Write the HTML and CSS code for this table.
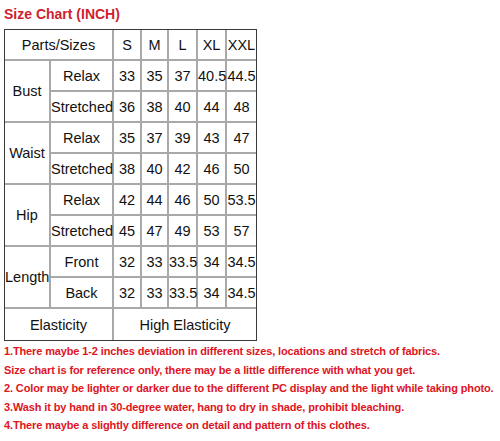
FILE: index.html
```html
<!DOCTYPE html>
<html>
<head>
<meta charset="utf-8">
<link rel="stylesheet" href="styles.css">
</head>
<body>
<div class="page">
  <h1 class="title">Size Chart (INCH)</h1>
  <table class="chart">
    <colgroup>
      <col class="c-part"><col class="c-sub"><col class="c-s"><col class="c-m"><col class="c-l"><col class="c-xl"><col class="c-xxl">
    </colgroup>
    <tr><td colspan="2">Parts/Sizes</td><td>S</td><td>M</td><td>L</td><td>XL</td><td class="last">XXL</td></tr>
    <tr><td rowspan="2">Bust</td><td>Relax</td><td>33</td><td>35</td><td>37</td><td>40.5</td><td class="last">44.5</td></tr>
    <tr><td>Stretched</td><td>36</td><td>38</td><td>40</td><td>44</td><td class="last">48</td></tr>
    <tr><td rowspan="2">Waist</td><td>Relax</td><td>35</td><td>37</td><td>39</td><td>43</td><td class="last">47</td></tr>
    <tr><td>Stretched</td><td>38</td><td>40</td><td>42</td><td>46</td><td class="last">50</td></tr>
    <tr><td rowspan="2">Hip</td><td>Relax</td><td>42</td><td>44</td><td>46</td><td>50</td><td class="last">53.5</td></tr>
    <tr><td>Stretched</td><td>45</td><td>47</td><td>49</td><td>53</td><td class="last">57</td></tr>
    <tr><td rowspan="2">Length</td><td>Front</td><td>32</td><td>33</td><td>33.5</td><td>34</td><td class="last">34.5</td></tr>
    <tr><td>Back</td><td>32</td><td>33</td><td>33.5</td><td>34</td><td class="last">34.5</td></tr>
    <tr class="bottom"><td colspan="2">Elasticity</td><td colspan="5" class="last">High Elasticity</td></tr>
  </table>
  <div class="notes">
    <p>1.There maybe 1-2 inches deviation in different sizes, locations and stretch of fabrics.</p>
    <p>Size chart is for reference only, there may be a little difference with what you get.</p>
    <p>2. Color may be lighter or darker due to the different PC display and the light while taking photo.</p>
    <p>3.Wash it by hand in 30-degree water, hang to dry in shade, prohibit bleaching.</p>
    <p>4.There maybe a slightly difference on detail and pattern of this clothes.</p>
  </div>
</div>
</body>
</html>
```

FILE: styles.css
```css
html, body {
  margin: 0;
  padding: 0;
  background: #ffffff;
}

.page {
  padding: 0 4px;
}

.title {
  margin: 0 0 6px 0;
  padding-top: 5px;
  font-family: "Liberation Sans", Arial, sans-serif;
  font-weight: bold;
  font-size: 14px;
  line-height: 18px;
  color: #cf1f2e;
}

.chart {
  border-collapse: separate;
  border-spacing: 0;
  table-layout: fixed;
  width: 252px;
  border: 1px solid #3a3a3a;
  font-family: "Liberation Sans", Arial, sans-serif;
  font-size: 14.5px;
  color: #111;
}

.c-part { width: 46px; }
.c-sub { width: 63px; }
.c-s { width: 28px; }
.c-m { width: 27px; }
.c-l { width: 29px; }
.c-xl { width: 29px; }
.c-xxl { width: 29px; }

.chart tr {
  height: 31px;
}

.chart td {
  padding: 0;
  text-align: center;
  vertical-align: middle;
  white-space: nowrap;
  border-right: 2px solid #a9a9a9;
  border-bottom: 2px solid #a9a9a9;
}

.chart td.last {
  border-right: none;
}

.chart tr.bottom td {
  border-bottom: none;
}

.notes {
  margin-top: 1px;
  font-family: "Liberation Sans", Arial, sans-serif;
  font-weight: bold;
  font-size: 11px;
  letter-spacing: -0.13px;
  color: #e0141e;
}

.notes p {
  margin: 0;
  line-height: 18.5px;
  white-space: nowrap;
}
```
